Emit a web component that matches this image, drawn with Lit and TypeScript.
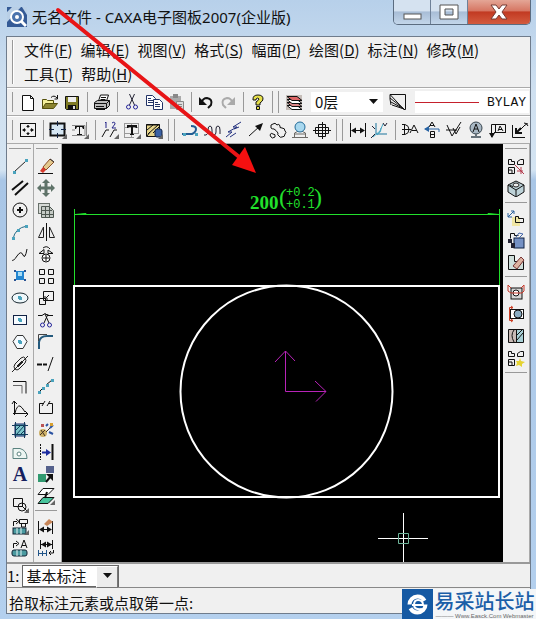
import { LitElement, html, svg, css, SVGTemplateResult } from "lit";
import { customElement } from "lit/decorators.js";

const K = "#111";
const corner = svg`<path d="M18 13v5h-5z" fill="#666"/>`;
const line = (d: string, c = K, w = 1) => svg`<path d=${d} fill="none" stroke=${c} stroke-width=${w}/>`;
const fill = (d: string, c = K) => svg`<path d=${d} fill=${c}/>`;
const dot = (x: number, y: number, c = "#4aa3bd") => svg`<rect x=${x - 1} y=${y - 1} width="3" height="3" fill=${c}/>`;
const scissors = svg`<g fill="none" stroke="#25259a"><circle cx="5.500" cy="14" r="2"/><circle cx="12.500" cy="14" r="2"/></g>`;

const icons: Record<string, SVGTemplateResult> = {
  new: svg`<path d="M3.500 2.500h8l3 3v12h-11z" fill="#fff" stroke="#111"/>${line("M11.500 2.500v3h3")}`,
  open: svg`<path d="M1.500 15.500v-9h4l1 1h6v3" fill="#f4ef9a" stroke="#55500c"/><path d="M1.500 15.500l3-5h12l-4 5z" fill="#8b8430" stroke="#55500c"/>${line("M10 4.500q3-3 6 .5M16.500 2v4h-3")}`,
  save: svg`<path d="M2.500 3.500h13v13h-12l-1-1z" fill="#7f7b25" stroke="#111"/><path d="M5 4h8v5H5z" fill="#eee"/><path d="M5 12h8v4H5z" fill="#111"/><path d="M10 13h2v3h-2z" fill="#ddd"/>`,
  print: svg`<path d="M5.500 8l2-6h8l-2 6" fill="#fff" stroke="#111"/>${line("M8 4.500h5M7.500 6.500h5")}<path d="M1.500 9.500l3-2h12v5l-3 3h-12z" fill="#bbb" stroke="#111"/>${line("M1.500 10.500h12v5M13.500 10.500l3-3M3 13.500h8", K, 1)}<path d="M3 16h9v1H3z" fill="#111"/>`,
  cut: svg`${line("M6.500 1l5 11M11.500 1l-5 11", "#223", 1)}${scissors}`,
  copy: svg`<g fill="#fff" stroke="#223366"><path d="M1.500 2.500h6l3 3v7h-9z"/><path d="M8.500 6.500h6l3 3v7h-9z"/></g>${line("M3 5.500h3M3 7.500h5M3 9.500h5M10 9.500h3M10 11.500h5M10 13.500h5", "#223366")}`,
  paste: svg`<rect x="3" y="3" width="11" height="13" fill="#aaa"/><rect x="6" y="1" width="5" height="4" fill="#888"/><path d="M9.500 8.500h7v8h-7z" fill="#ddd" stroke="#888"/>${line("M11 11.500h4M11 13.500h4", "#888")}`,
  undo: svg`${line("M4 10q2-5 6-5 6 1 4 7l-3 3", K, 2)}${fill("M2 4v8h8z")}`,
  redo: svg`${line("M14 10q-2-5-6-5-6 1-4 7l3 3", "#aaa", 2)}${fill("M16 4v8h-8z", "#aaa")}`,
  help: svg`<path d="M4 6q0-4 5-4t5 4q0 2-3 4v2H7V9q3-2 3-3-1-2-3 0v1H4z" fill="#e6e04a" stroke="#111"/><path d="M7.500 13.500h3v3h-3z" fill="#e6e04a" stroke="#111"/>`,
  layers: svg`<rect x="1" y="2" width="16" height="15" fill="#c5bdb8"/><g stroke="#111"><path d="M2 12.500h10l5 4H7z" fill="#fff"/><path d="M2 9.500h10l5 4H7z" fill="#d88"/><path d="M2 6.500h10l5 4H7z" fill="#fff"/><path d="M2 3.500h10l5 4H7z" fill="#d66"/></g>`,
  linetype: svg`${line("M1 1.500h15.500v15H15L1 1.500M1 5l14 11M2 9l13 7M3 12l12 4M1 2v4l1 6")}`,
  zoomall: svg`<rect x="1.500" y="2.500" width="15" height="13" fill="none" stroke="#111"/>${line("M9 4v3M9 11v3M4 9h3M11 9h3", K)}${fill("M7 6l2-2 2 2zM7 12l2 2 2-2zM6 7v4L3 9zM12 7v4l3-2z")}`,
  frame: svg`<rect x="1.500" y="2.500" width="14" height="12" fill="#d6e6f2" stroke="#111" stroke-width="2"/>${line("M8.500 0v5M8.500 12v5M0 8.500h5M12 8.500h5", "#124")}${corner}`,
  textframe: svg`<path d="M1 4.500h13v10H1M15.500 1v14M1 9h3" fill="none" stroke="#888"/><path d="M4 5h9v3h-1l-1-2h-2v7h2v1H6v-1h2V6H6L5 8H4z" fill="#111"/>${corner}`,
  index: svg`${line("M1 16l4-7h3M9 16l4-7h3")}${line("M4 2l1-1v6M11 2q3-2 3 1l-3 4h4", "#228")}${corner}`,
  tabletext: svg`<path d="M1 2.500h15M1 6.500h15M1 12.500h15M1 16.500h10M1.500 2v14M8.500 2v14M15.500 2v10" fill="none" stroke="#999"/><path d="M4 4h10v3h-1l-1-1h-2v7h1v1H7v-1h1V6H6L5 7H4z" fill="#111"/>${corner}`,
  library: svg`<path d="M1.500 3.500h13v12h-13z" fill="#e6d58c" stroke="#111"/>${line("M1 4h14M2 9l6-5M3 13l10-9M8 12l6-6M2 15l3-4", K, 1)}<rect x="10" y="8" width="7" height="8" rx="2" fill="#3c62a4" stroke="#124"/>${corner}`,
  pline: svg`${line("M1 13h10q4-2 4-5t-5-3", "#225c92", 2)}${dot(3, 13)}${dot(15, 13)}`,
  wave: svg`${line("M1 14h2q2 0 2-5 0-4 2-4t2 4v2q0 3 2 3t2-3V8q0-3 2-3 2 0 2 4v4", "#223")}`,
  zigzag: svg`${line("M1 16l6-5H3l9-5H8l8-5M5 16l6-4M9 8l5-2", "#22307e", 1)}`,
  arrow: svg`${line("M2 15L13 5", K)}${fill("M8 5l8-3-3 8z")}`,
  cloud: svg`<path d="M2 7q-1-4 2-4 2-2 4 1 2-2 3 1-1 2 2 2 3 0 3 3 2 1 0 3 0 3-3 3-2 1-3-1-2-1-1-3-2-3-4-4-2 0-3-1M1 14q1-3 3-1 3 0 2 3-3 2-4 0z" fill="none" stroke="#111"/>`,
  lens: svg`<path d="M1 16.500h16M3.500 16v-4l4-2h3l4 2v4M3 13h12" fill="none" stroke="#6d6a66"/><circle cx="9" cy="6" r="5" fill="#a8d8ef" stroke="#236b98"/>`,
  shaft: svg`${line("M0 9.500h18M2.500 6.500h13v6h-13zM5.500 3.500h7v12h-7zM9.500 1v17")}`,
  dimension: svg`${line("M1.500 2v14M16.500 2v14M3 9.500h12", K, 1)}${fill("M2 9.500l5-3v6zM16 9.500l-5-3v6z")}`,
  coorddim: svg`${line("M5 2v11h11", "#1d759c", 1)}${line("M2 16l7-6 3-7M6 14q5-3 4-7", "#43a5c4")}${line("M1 5l3 3M12 2l2 3 2-3M0 17l4-4", "#223")}`,
  chamfer: svg`${line("M1 3.500h3q4 1 4 5t-4 5H1M3.500 3v11M1 8.500h9M9 12l4-8 4 8M11 9.500h5")}`,
  datum: svg`${line("M6 6l3-5 3 5M7 4.500h4M7.500 10.500h4v6h-4zM7 13.500h4", K)}${line("M2 8h14v3", "#2863a3", 1)}${fill("M1 8l5-3v6z", "#2863a3")}`,
  rough: svg`${line("M2 4l5 11L16 1M1 9h11M8 7l3 6 4-7")}`,
  magnify: svg`<circle cx="9" cy="7" r="6" fill="#a9b8c4" stroke="#39464f"/>${line("M6 11l3-8 3 8M7 8h4", K)}${line("M4 16h10M9 13v3", "#67727a", 2)}`,
  gtol: svg`${line("M2.500 16V3.500h14v8h-10v-8M9 10l2-5 3 5M10 8.500h3M5 11.500h12")}${fill("M0 12h6l-3 5z")}`,
  weld: svg`${line("M1.500 4v12.500H14M9 9l5-5q2-2 3 1M13 2l4 1")}${line("M5 7v5h6M5 12l5-5", K, 2)}`,
  line: svg`${line("M3 15L15 4", "#222")}${dot(3, 15)}${dot(15, 3)}`,
  parallel: svg`${line("M1 11L12 2M4 16L17 4", K, 2)}`,
  circle: svg`<circle cx="9" cy="9" r="7" fill="none" stroke="#111" stroke-width="1"/>${line("M6 9h6M9 6v6", K, 2)}`,
  arc: svg`${line("M2 16q2-11 14-13", "#246a86", 1)}${dot(2, 15)}${dot(7, 7)}${dot(15, 3)}`,
  spline: svg`${line("M1 15q1 2 5-4t6-1 4-6")}`,
  point: svg`<rect x="5" y="4" width="8" height="9" fill="#2386d1"/><rect x="7" y="5" width="4" height="4" fill="#a6dcf5"/><path d="M3 3h2v2H3zM13 3h2v2h-2zM3 12h2v2H3zM13 12h2v2h-2z" fill="#2a5392"/>`,
  ellipse: svg`<ellipse cx="9" cy="9" rx="8" ry="5" fill="#eef7fa" stroke="#15252e"/>${dot(8, 8)}${dot(9, 9)}`,
  rect: svg`<rect x="2.500" y="4.500" width="13" height="9" fill="#f6fbff" stroke="#124"/>${dot(8, 8)}${dot(9, 9)}`,
  polygon: svg`<path d="M6 2.500h6l4 6-4 7H6l-4-7z" fill="#f6fbff" stroke="#333"/>${dot(8, 8)}${dot(9, 9)}`,
  slot: svg`<path d="M4 14q-2-2 0-5l6-6q3-2 4 0 2 2 0 5l-6 6q-2 2-4 0zM1 17L17 1M6 11l5-5M7 12l5-5" fill="none" stroke="#222"/>`,
  offset: svg`${line("M2 4.500h13v12", K)}${line("M2 8.500h9v8", "#666")}`,
  formula: svg`${line("M3.500 16V3M2 14.500h15M1 5l2-3 3 3M14 12l3 3-3 3M4 14q2-8 5-7 2 1 5 6")}`,
  hatch: svg`<rect x="4" y="3" width="10" height="12" fill="#7cc6cb" stroke="#126"/>${line("M1 4.500h16M1 13.500h16M4.500 1v16M13.500 1v16M5 9l5-5M5 14l8-9M9 14l5-5", "#123c5b")}`,
  region: svg`<path d="M2 15.500v-10h7q7 2 7 10z" fill="#ecf5f2" stroke="#5b8380"/><circle cx="8" cy="11" r="2" fill="#fff" stroke="#5b8380"/>`,
  block: svg`${line("M2.500 3.500h9v8h-9zM11 11l5 5")}<circle cx="11" cy="12" r="4" fill="none" stroke="#111"/>${corner}`,
  partlib: svg`${line("M2.500 9V4.500H6M5 2l3 2.500L5 7M8.500 2.500h8v4h-8zM10.500 7v3h4V7")}<rect x="2" y="11" width="13" height="6" fill="#4a9aa0" stroke="#123"/>${line("M6 11v6M10 11v6", "#e8f4f4")}${corner}`,
  textlib: svg`${line("M2.500 9V4.500H6M5 2l3 2.500L5 7M10 9l3-8 3 8M11 6.500h4")}<rect x="1" y="11" width="15" height="6" rx="2" fill="#4a9aa0" stroke="#123"/>${line("M6 11v6M10 11v6", "#e8f4f4")}`,
  eraser: svg`<path d="M6 10l7-8 4 3-8 8z" fill="#e4c98d" stroke="#8a4f2a"/><path d="M6 10l-3 4 3 2 3-3z" fill="#d63a2c"/>${line("M13 2l4 3", "#333")}${line("M1 16.500h15")}`,
  move: svg`${fill("M9 0l4 4H5zM9 18l-4-4h8zM0 9l4-4v8zM18 9l-4 4V5z", "#5f7369")}${line("M9 3v12M3 9h12", "#5f7369", 3)}`,
  array: svg`<rect x="1.500" y="2.500" width="11" height="10" fill="#d6dad6" stroke="#68706a"/><path d="M4.500 5.500h8l4 4v7h-12z" fill="#c4cac5" stroke="#4d5650"/>${line("M5 9.500h10M5 13.500h11M8.500 6v10M12.500 6v10", "#4d5650")}`,
  mirror: svg`${line("M9.500 0v18")}${line("M6.500 4v10.500H1.500zM12.500 4v10.500h5z", "#222")}`,
  rotate: svg`${line("M2 8.500l5-4v4zM11 5l5 3.500h-5zM6 3q4-3 7 1")}<circle cx="9" cy="13" r="4" fill="#fff" stroke="#111"/>${line("M6 13h6M9 10v6")}`,
  grid: svg`${line("M2.500 2.500h5v5h-5zM11.500 2.500h5v5h-5zM2.500 11.500h5v5h-5zM11.500 11.500h5v5h-5z")}`,
  scale: svg`${line("M6.500 2.500h10v9h-10zM2.500 9.500h6v6h-6zM12 6l-4 4M8 7v3h3")}`,
  trim: svg`${line("M1 4.500h4l3-2 3 2h5M8 3l4 9M11 3l-4 9")}${scissors}`,
  fillet: svg`${line("M2 16V9q1-6 8-6h6", "#245a7d", 2)}${line("M1.500 8V1.500H10", "#444")}`,
  extend: svg`${line("M0 9.500h5M6 9.500h4", K, 2)}${line("M11 16l5-14")}`,
  stretch: svg`${line("M2 15l4-4M9 8l6-5", K)}${dot(2, 15)}${dot(6, 11)}${dot(10, 8)}${dot(15, 3)}`,
  breakl: svg`${line("M6 4.500H2.500v10h13v-10H12M8 2L5 7M13 2l-3 5")}`,
  explode: svg`<circle cx="6" cy="12" r="4" fill="#cdb067"/>${line("M4 9l4 6M3 14l5-5M9 11l4-4", "#432")}${line("M9 5l2-2M13 7l3-3M12 11l4 2", "#2b53a2", 2)}${dot(5, 4, "#b55")}${dot(14, 3, "#d7a030")}`,
  stretchx: svg`<path d="M3.500 1v16" stroke="#111" stroke-dasharray="2 1"/>${line("M15.500 1v16", K, 2)}${line("M5 9.500h5", "#1c2ca0", 2)}${fill("M9 6v7l5-3.500z", "#1c2ca0")}`,
  format: svg`<rect x="9" y="1" width="8" height="7" fill="#55618c"/><rect x="1" y="9" width="8" height="8" fill="#319a70"/>${line("M9 17l5-6", K, 2)}${fill("M9 9h7v7z")}`,
  copyprop: svg`<path d="M6 1.500h11l-6 6H1z" fill="#fff" stroke="#111"/><path d="M6 10.500h11l-6 6H1z" fill="#48c49c" stroke="#111"/>${line("M10 5l-2 6", K, 2)}${corner}`,
  dimedit: svg`${line("M1.500 4v13M15.500 4v13M3 12.500h11")}${fill("M2 12.500l5-3v6zM15 12.500l-5-3v6z")}<path d="M7 7l5-5 4 3-6 4z" fill="#c78558"/>`,
  dimstyle: svg`${line("M3.500 1v9M15.500 1v9M4 5.500h11M16.500 11v3h-4M14 12l-2 2 2 2")}${fill("M4 5.500l5-3v6zM15 5.500l-5-3v6z")}${line("M1.500 11v6M9.500 11v6M2 14.500h7M5.500 12v5", "#258", 1)}`,
  blocks: svg`${line("M1.500 7.500v-5h3v2h3v3zM10.500 7.500v-3l3-2h3v5zM1.500 10.500h6v6h-6zM1 13h4v4")}${line("M8 8l9 9M10 14h6M14 10v7", "#b3384a")}`,
  iso: svg`<path d="M1 6l8-4 8 4v7l-8 5-8-5z" fill="#bdd2d8" stroke="#111"/>${line("M1 6l8 5 8-5M9 11v7M3 6l3 2")}<ellipse cx="9" cy="6" rx="3" ry="2" fill="#eee" stroke="#222"/>`,
  explodeview: svg`<rect x="5" y="8" width="8" height="9" fill="#f0e6a4"/>${line("M8.500 13.500v-6h3v2h5v4z")}${line("M1 8l6-6M1 4v4h4M4 2h3v3", "#2a609b", 1)}`,
  check: svg`${line("M3.500 7.500v-5h4v2h4")}<rect x="7" y="7" width="10" height="10" fill="#7591c4" stroke="#124"/><path d="M1 8h4v4H1zM4 12h4v5H4z" fill="#223"/>${line("M9 6l3-4 4 1-4 4", "#46a")}`,
  blockerase: svg`<path d="M1.500 16.500v-14h6v6h9v8z" fill="#cfdfdb" stroke="#111"/><path d="M6 13l8-9 3 3-7 9z" fill="#ddb2a0" stroke="#733"/>`,
  clamp: svg`<rect x="4" y="5" width="11" height="11" fill="#d5d5d5" stroke="#111"/><circle cx="9" cy="10" r="3" fill="#fff" stroke="#111"/>${line("M1 2v6l3 2h11l2-2V2M1 2l3 3M17 2l-3 3", "#c63728")}`,
  section: svg`<rect x="3.500" y="4.500" width="13" height="9" fill="#fff" stroke="#111"/><circle cx="11" cy="9" r="4" fill="#8aacc2" stroke="#111"/>${line("M6 2.500H2.500v13H6M4 1l2 1.500L4 4M4 14l2 1.500L4 17", "#cc4026", 1)}`,
  cutaway: svg`<path d="M1.500 2.500h15v13h-15z" fill="#c8bab5" stroke="#111"/><path d="M10 3h6v12h-6z" fill="#a8d0d6"/>${line("M9.500 2v14M10 8l6-6M10 13l6-7M7 3q-4 5 0 12")}`,
  blocknew: svg`${line("M1.500 7.500v-5h3v2h3v3zM10.500 7.500v-3l3-2h3v5zM1.500 10.500h6v6h-6zM1 13h4v4")}${fill("M13 9l1 3 4 1-3 2v3l-3-2-3 1 1-3-1-2h3z", "#e5d331")}`,
};

const SEP = "|";
const GRIP = "||";
const row1 = "new open save | print | cut copy paste | undo redo | help || layers".split(" ");
const row2 = "zoomall | frame textframe | index tabletext library || pline wave zigzag arrow cloud lens shaft || dimension coorddim | chamfer datum rough magnify gtol weld".split(" ");
const col1 = "line parallel circle arc spline point ellipse rect polygon slot offset formula hatch region letter | block partlib textlib".split(" ");
const col2 = "eraser move array mirror rotate grid scale trim fillet extend stretch breakl explode stretchx format copyprop | dimedit dimstyle".split(" ");
const col3 = "blocks iso | explodeview check blockerase | clamp section cutaway blocknew |".split(" ");

const tool = (name: string) => {
  if (name === SEP) return html`<span class="sep"></span>`;
  if (name === GRIP) return html`<span class="grip"></span>`;
  if (name === "letter") return html`<button class="tool letter" aria-label="text">A</button>`;
  return html`<button class="tool" aria-label=${name}><svg viewBox="0 0 18 18">${icons[name]}</svg></button>`;
};

const menus = [
  ["文件", "F"], ["编辑", "E"], ["视图", "V"], ["格式", "S"], ["幅面", "P"],
  ["绘图", "D"], ["标注", "N"], ["修改", "M"], ["工具", "T"], ["帮助", "H"],
];

@customElement("app-root")
export class AppRoot extends LitElement {
  static styles = css`
    :host {
      display: flex;
      flex-direction: column;
      min-height: 100vh;
      box-sizing: border-box;
      position: relative;
      overflow: hidden;
      padding: 0 5px 7px 6px;
      background: linear-gradient(#b7d0ea 0, #cfe0f0 90px, #d4e4f2 170px, #a9c6e6 180px, #b4d0ee 100%);
      font-family: "Noto Sans CJK SC", sans-serif;
      font-size: 15px;
      color: #111;
    }
    * { box-sizing: border-box; }
    button { font: inherit; color: inherit; border: 0; padding: 0; background: none; }
    .title { display: flex; height: 36px; align-items: flex-start; gap: 5px; }
    .logo { width: 20px; height: 20px; margin: 7px 0 0 1px; flex: none; }
    .title h1 { flex: 1; margin: 0; font-family: "Noto Sans", "Noto Sans CJK SC", sans-serif; font-size: 15px; font-weight: 400; line-height: 35px; white-space: nowrap; }
    .caption { display: flex; height: 25px; border: 1px solid #5b6c80; border-top: 0; border-radius: 0 0 5px 5px; overflow: hidden; }
    .caption button { width: 37px; background: linear-gradient(#d5e2f0 0 45%, #a8bdd6 50%, #c3d6ea); border-right: 1px solid #6f8198; }
    .caption .close { width: 62px; border: 0; background: linear-gradient(#e4a696 0, #d67663 45%, #c23a22 50%, #d35b3f); }
    .caption svg { width: 20px; height: 16px; display: block; margin: 0 auto; }
    .client { flex: 1; display: flex; flex-direction: column; background: #f0f0f0; border: 1px solid #6f7c8c; min-width: 0; }
    .menu { display: flex; align-items: center; padding: 1px 0 2px 5px; gap: 6px; border-bottom: 1px solid #aaa; }
    .menu .bar { width: 2px; height: 44px; border-left: 1px solid #999; border-right: 1px solid #fff; }
    .items { display: flex; flex-wrap: wrap; flex: 1; padding-right: 8px; row-gap: 1px; }
    .items button { line-height: 23px; padding: 0 4px; white-space: nowrap; }
    .row { display: flex; align-items: center; height: 28px; padding-left: 5px; overflow: hidden; border-top: 1px solid #fff; border-bottom: 1px solid #aaa; }
    .row > * { flex: none; }
    .lead { width: 5px; height: 20px; border-left: 1px solid #999; }
    .tool { width: 22px; height: 22px; display: flex; align-items: center; justify-content: center; flex: none; }
    .tool svg { width: 18px; height: 18px; display: block; }
    .letter { font: bold 20px/22px "Liberation Serif", serif; color: #16205e; }
    .row .sep { width: 8px; height: 20px; background: linear-gradient(#999, #999) 4px 0 / 1px 100% no-repeat; }
    .row .grip { width: 14px; height: 22px; background: linear-gradient(#999, #999) 3px 0 / 1px 100% no-repeat, linear-gradient(#999, #999) 9px 0 / 1px 100% no-repeat; }
    .pick { position: relative; display: block; }
    .pick select { appearance: none; width: 100%; height: 20px; border: 0; padding: 0 0 0 4px; background: #fff; font: inherit; line-height: 20px; color: #111; border-radius: 0; display: block; }
    .pick svg { position: absolute; right: 5px; top: 7px; width: 9px; height: 5px; pointer-events: none; }
    .layer { width: 72px; margin: 0 4px 0 6px; }
    .row .style { display: flex; align-items: center; flex: 1 1 0; min-width: 0; height: 22px; margin: 0 1px 0 6px; background: #fff; font: 13px "Liberation Mono", monospace; white-space: nowrap; }
    .style i { flex: none; width: 64px; height: 1px; background: #c5202c; margin-right: 8px; }
    .work { flex: 1; display: flex; min-height: 0; }
    .column { flex: none; width: 27px; display: flex; flex-direction: column; align-items: center; padding-top: 11px; border-right: 1px solid #aaa; background: linear-gradient(#999, #999) 2px 4px / 22px 1px no-repeat; }
    .column .sep { width: 22px; height: 8px; background: linear-gradient(#999, #999) 0 3px / 100% 1px no-repeat; }
    .left { width: 28px; padding-right: 4px; }
    .canvas { flex: 1; min-width: 0; background: #000; }
    .canvas svg { display: block; width: 100%; height: auto; }
    .options { display: flex; align-items: center; height: 26px; border-top: 2px solid #999; border-bottom: 1px solid #888; }
    .options label { display: flex; align-items: center; }
    .options .pick { width: 97px; margin-left: 2px; border: 1px solid #666; }
    .options .pick svg { right: 6px; z-index: 1; }
    .options .pick::after { content: ""; position: absolute; right: 0; top: 0; width: 20px; height: 20px; background: #ececec; border: 1px solid; border-color: #fff #777 #777 #fff; pointer-events: none; }
    .status { height: 25px; line-height: 29px; padding-left: 2px; margin: 0; }
    .pointer { position: absolute; left: 0; top: 0; width: 270px; height: 180px; pointer-events: none; }
    .mark { position: absolute; right: 0; bottom: 0; height: 32px; width: 134px; display: flex; background: #f4f6f8; }
    .mark svg { width: 31px; height: 31px; flex: none; }
    .mark div { flex: 1; display: flex; flex-direction: column; align-items: center; color: #1c5fa8; font-weight: 500; font-size: 20px; line-height: 24px; white-space: nowrap; }
    .mark small { font: 6px/6px "Liberation Sans", sans-serif; color: #666; }
  `;

  render() {
    const down = html`<svg viewBox="0 0 9 5"><path d="M0 0h9L4.500 5z" fill="#111"/></svg>`;
    return html`
      <header class="title">
        <svg class="logo" viewBox="0 0 20 20">
          <rect width="20" height="20" fill="#345a96"/><path d="M0 5l5-5h9L0 15zM15 0h5v8z" fill="#b9cfe6"/>
          <circle cx="10" cy="10" r="6" fill="#4b73ad" stroke="#fff" stroke-width="2"/><circle cx="10" cy="10" r="2" fill="#fff"/>
          <path d="M14 14l5 5" stroke="#fff" stroke-width="3"/>
        </svg>
        <h1>无名文件 - CAXA电子图板2007(企业版)</h1>
        <div class="caption">
          <button aria-label="minimize"><svg viewBox="0 0 20 16"><rect x="2" y="10" width="17" height="5" fill="#fff" stroke="#555"/></svg></button>
          <button aria-label="maximize"><svg viewBox="0 0 20 16"><path d="M1 1h18v14H1zM6 5v6h8V5z" fill="#fff" fill-rule="evenodd" stroke="#555"/></svg></button>
          <button class="close" aria-label="close"><svg viewBox="0 0 20 16"><path d="M2 1h5l3 4 3-4h5l-5 7 5 7h-5l-3-4-3 4H2l5-7z" fill="#fff" stroke="#753c35"/></svg></button>
        </div>
      </header>
      <main class="client">
        <nav class="menu">
          <span class="bar"></span>
          <div class="items">${menus.map(([t, k]) => html`<button>${t}(<u>${k}</u>)</button>`)}</div>
        </nav>
        <div class="row">
          <span class="lead"></span>
          ${row1.map(tool)}
          <label class="pick layer"><select aria-label="图层"><option>0层</option></select>${down}</label>
          ${tool("linetype")}
          <button class="style"><i></i>BYLAY</button>
        </div>
        <div class="row"><span class="lead"></span>${row2.map(tool)}</div>
        <section class="work">
          <div class="column">${col1.map(tool)}</div>
          <div class="column left">${col2.map(tool)}</div>
          <div class="canvas">
            <svg viewBox="0 0 441 418">
              <g stroke="#22e02c" fill="#22e02c">
                <path d="M12.500 65v77M437.500 65v77M12 70.500h425" fill="none"/>
                <path d="M13 70.500l11-1v1zM437 70.500l-11-1v1z"/>
              </g>
              <g fill="#22e02c" font-family="Liberation Serif, serif">
                <text x="188" y="65" font-size="19" font-weight="bold">200</text>
                <text x="217" y="61" font-size="24">(</text><text x="252" y="61" font-size="24">)</text>
                <g font-family="Liberation Mono, monospace" font-size="12"><text x="224" y="52">+0.2</text><text x="224" y="64">+0.1</text></g>
              </g>
              <g fill="none" stroke="#fff" stroke-width="2"><path d="M12 142h425v211H12z"/><circle cx="224.500" cy="247.500" r="106"/></g>
              <path d="M223.500 207v40.500H264M213 218l10.500-11 9.500 10M253 237l11 10.500-10 10" fill="none" stroke="#b823b8"/>
              <path d="M341.500 369v49M316 394.500h50" stroke="#fff"/><path d="M336.500 389.500h10v10h-10z" fill="none" stroke="#6fb59b"/>
            </svg>
          </div>
          <div class="column">${col3.map(tool)}</div>
        </section>
        <div class="options">
          <label>1:<span class="pick"><select aria-label="标注方式"><option>基本标注</option></select>${down}</span></label>
        </div>
        <p class="status">拾取标注元素或点取第一点:</p>
      </main>
      <svg class="pointer" viewBox="0 0 270 180"><path d="M58 10L238 156" stroke="#e81416" stroke-width="4" stroke-linecap="round"/><path d="M256 173l-24-8 13-18z" fill="#f51010"/></svg>
      <aside class="mark">
        <svg viewBox="0 0 31 31"><rect width="31" height="31" fill="#1559a3"/><circle cx="15.500" cy="15.500" r="8" fill="none" stroke="#fff" stroke-width="4" stroke-dasharray="21 4"/><path d="M10 16h11q0-5-5-5-4 0-4 5t8 4" fill="none" stroke="#fff" stroke-width="2"/></svg>
        <div>易采站长站<small>——— Www.Easck.Com Webmaster</small></div>
      </aside>
    `;
  }
}
